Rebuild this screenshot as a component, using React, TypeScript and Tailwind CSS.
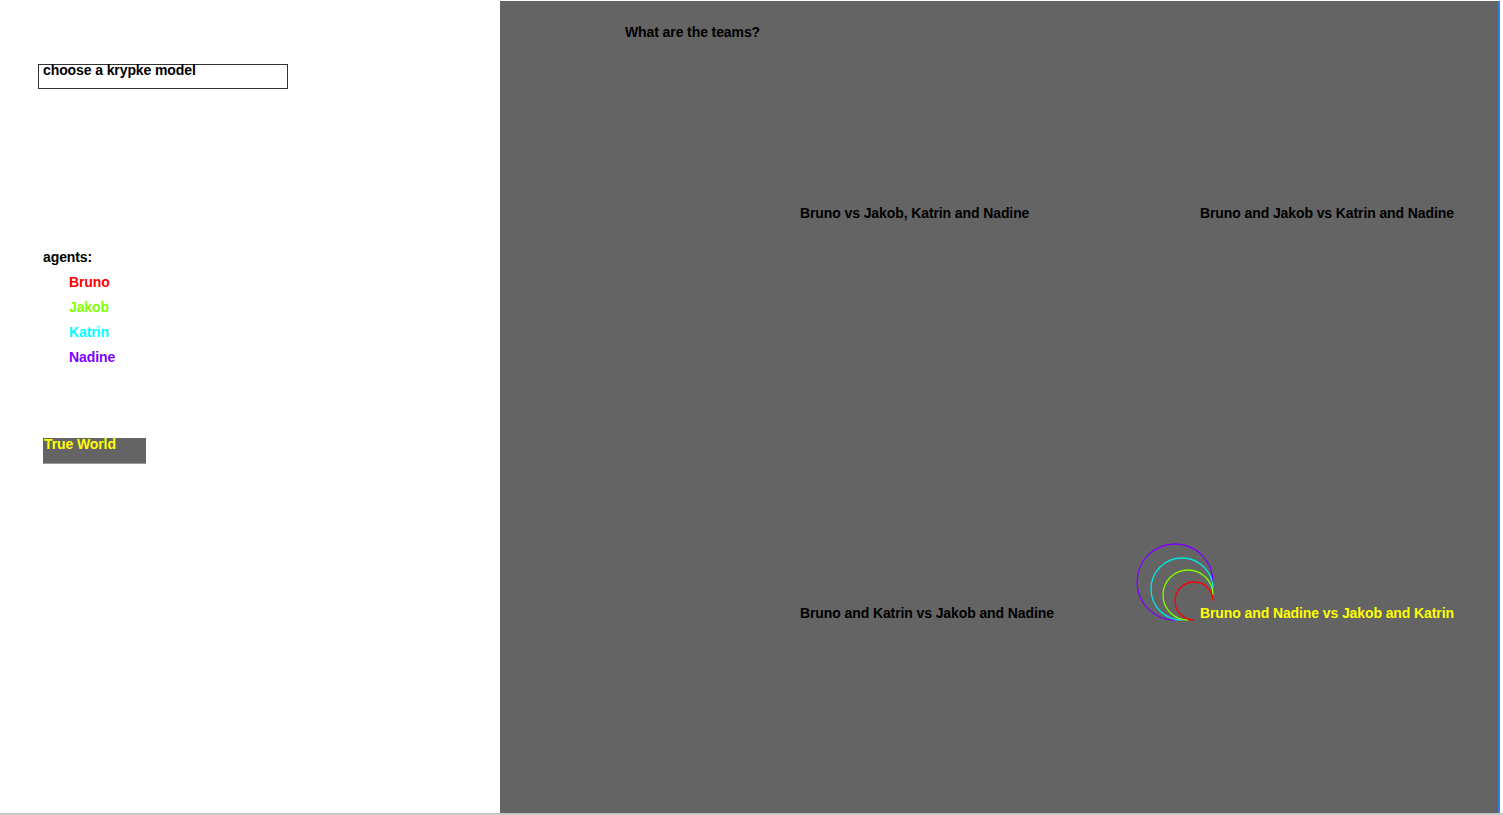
import React from "react";

const font = { fontFamily: '"Liberation Sans", Arial, sans-serif' };

function Loops() {
  const loops = [
    { r: 38, c: "#8000ff" },
    { r: 31, c: "#00e5e5" },
    { r: 25, c: "#80ff00" },
    { r: 19, c: "#ff0000" },
  ];
  return (
    <svg className="absolute left-0 top-0" width="1000" height="812" viewBox="500 1 1000 812">
      {loops.map((l) => {
        const cx = 1213 - l.r;
        const cy = 620 - l.r;
        return (
          <path
            key={l.c}
            d={`M ${cx + l.r} ${cy} A ${l.r} ${l.r} 0 1 0 ${cx} ${cy + l.r}`}
            fill="none"
            stroke={l.c}
            strokeWidth="1.3"
          />
        );
      })}
    </svg>
  );
}

export default function App() {
  const agents = [
    { n: "Bruno", c: "text-[#ff0000]" },
    { n: "Jakob", c: "text-[#80ff00]" },
    { n: "Katrin", c: "text-[#00ffff]" },
    { n: "Nadine", c: "text-[#8000ff]" },
  ];
  return (
    <div className="w-[1503px] h-[815px] bg-white flex overflow-hidden relative" style={font}>
      <div className="w-[500px] shrink-0 flex flex-col pl-[38px] pt-[64px] text-[14px] font-bold tracking-[-0.1px] text-black">
        <div className="w-[250px] h-[25px] border border-[#333] px-[4px] leading-[10px]">choose a krypke model</div>
        <div className="pl-[5px] mt-[156px] leading-[25px]">
          <div>agents:</div>
          <div className="pl-[26px] flex flex-col">
            {agents.map((a) => (
              <div key={a.n} className={a.c}>{a.n}</div>
            ))}
          </div>
        </div>
        <div className="ml-[5px] mt-[68px] w-[103px] h-[26px] bg-[#646464] text-[#ffff00] leading-[12px] pl-[1px] border-b border-[#999]">True World</div>
      </div>
      <div className="w-[1000px] h-[812px] mt-[1px] bg-[#646464] relative text-[14px] font-bold tracking-[-0.1px] text-black border-r-2 border-[#2f80e0]">
        <Loops />
        <div className="absolute left-[125px] top-[21px]">What are the teams?</div>
        <div className="absolute left-[300px] top-[202px]">Bruno vs Jakob, Katrin and Nadine</div>
        <div className="absolute left-[700px] top-[202px]">Bruno and Jakob vs Katrin and Nadine</div>
        <div className="absolute left-[300px] top-[602px]">Bruno and Katrin vs Jakob and Nadine</div>
        <div className="absolute left-[700px] top-[602px] text-[#ffff00]">Bruno and Nadine vs Jakob and Katrin</div>
      </div>
      <div className="absolute left-0 bottom-0 w-full h-[2px] bg-[#c8c8c8]" />
    </div>
  );
}
